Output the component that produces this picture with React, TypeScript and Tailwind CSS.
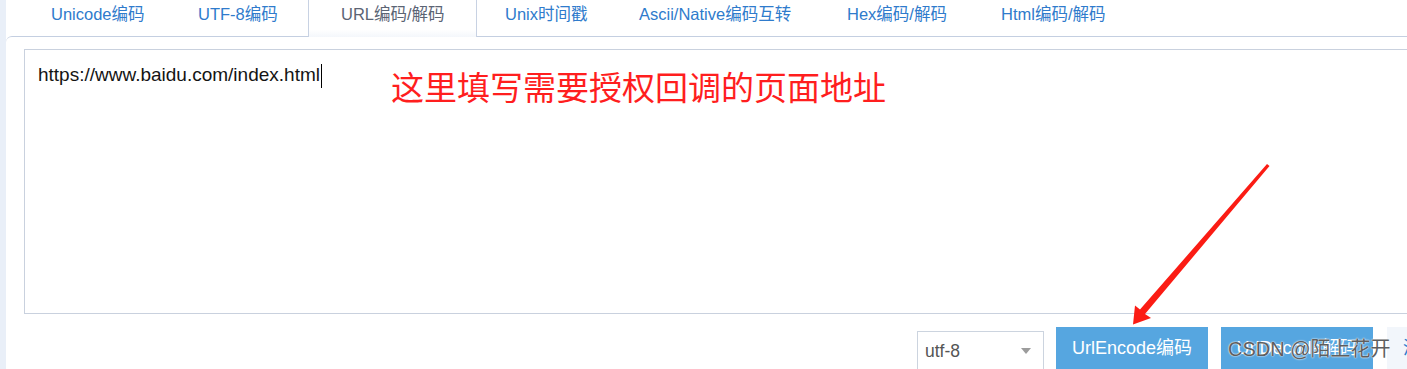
export default function App() {
  const tabs = [
    { label: "Unicode编码", w: "w-[164px]", pl: "pl-[45px]" },
    { label: "UTF-8编码", w: "w-[138px]", pl: "pl-[28px]" },
    { label: "URL编码/解码", w: "w-[169px]", pl: "pl-[32px]", active: true },
    { label: "Unix时间戳", w: "w-[123px]", pl: "pl-[28px]" },
    { label: "Ascii/Native编码互转", w: "w-[215px]", pl: "pl-[39px]" },
    { label: "Hex编码/解码", w: "w-[155px]", pl: "pl-[32px]" },
    { label: "Html编码/解码", w: "w-[180px]", pl: "pl-[31px]" },
  ];
  return (
    <div className="relative flex h-[369px] w-[1407px] overflow-hidden bg-white font-['Liberation_Sans','Noto_Sans_CJK_SC',sans-serif]">
      <div className="w-[6px] shrink-0 bg-[#e9eff8]" />
      <div className="flex min-w-0 flex-1 flex-col">
        <div className="flex h-[36px] shrink-0 bg-white">
          {tabs.map((t) =>
            t.active ? (
              <div
                key={t.label}
                className={`relative z-10 -mb-[1px] h-[37px] shrink-0 border-x border-[#c8d2e3] bg-gradient-to-b from-white from-80% to-[#f4f7fb] text-[16.5px] leading-[29px] text-[#5b6474] ${t.w} ${t.pl}`}
              >
                {t.label}
              </div>
            ) : (
              <div
                key={t.label}
                className={`h-[36px] shrink-0 text-[16.5px] leading-[29px] text-[#2f7bcc] ${t.w} ${t.pl}`}
              >
                {t.label}
              </div>
            )
          )}
        </div>
        <div className="flex-1 rounded-tl-[6px] border-t border-[#c4cfe1] bg-white pl-[18px] pt-[12px]">
          <div className="relative h-[265px] w-[1420px] border border-[#c9d1de] pl-[13px] pt-[11px] text-[19px] leading-[28px] text-[#141414]">
            https://www.baidu.com/index.html
            <span className="ml-[1px] inline-block h-[24px] w-[1px] bg-black align-middle" />
            <span className="absolute left-[366px] top-[20px] whitespace-nowrap font-['Noto_Sans_CJK_SC',sans-serif] text-[33px] leading-[33px] text-[#ff1e1e]">
              这里填写需要授权回调的页面地址
            </span>
          </div>
          <div className="flex pl-[893px] pt-[13px]">
            <div className="mt-[4px] flex h-[40px] w-[127px] shrink-0 items-center justify-between border border-[#ccd4df] bg-white pl-[7px] pr-[12px] text-[17.5px] text-[#555]">
              <span>utf-8</span>
              <svg width="10" height="6" viewBox="0 0 10 6">
                <path d="M0 0 L10 0 L5 6 Z" fill="#9c9c9c" />
              </svg>
            </div>
            <div className="ml-[12px] flex h-[42px] w-[152px] shrink-0 items-center justify-center bg-[#56a6e0] text-[18px] text-white">
              UrlEncode编码
            </div>
            <div className="ml-[13px] flex h-[42px] w-[152px] shrink-0 items-center justify-center bg-[#56a6e0] text-[18px] text-white">
              UrlDecode解码
            </div>
            <div className="ml-[14px] flex h-[42px] w-[80px] shrink-0 items-center bg-[#f2f6fb] pl-[16px] text-[18px] text-[#2f7bcc]">
              清空
            </div>
          </div>
        </div>
      </div>
      <div className="pointer-events-none absolute left-[1228px] top-[336px] whitespace-nowrap text-[20px] leading-[26px] text-[#5e5e5e] [text-shadow:0_0_2px_#ffffff,0_0_1px_#ffffff]">
        CSDN @陌上花开
      </div>
      <svg className="pointer-events-none absolute left-0 top-0" width="1407" height="369" viewBox="0 0 1407 369">
        <polygon
          points="1267,164 1269.5,166 1145,314 1151,318 1133,324.5 1135,305.5 1140,309.5"
          fill="#fb1c14"
        />
      </svg>
    </div>
  );
}
